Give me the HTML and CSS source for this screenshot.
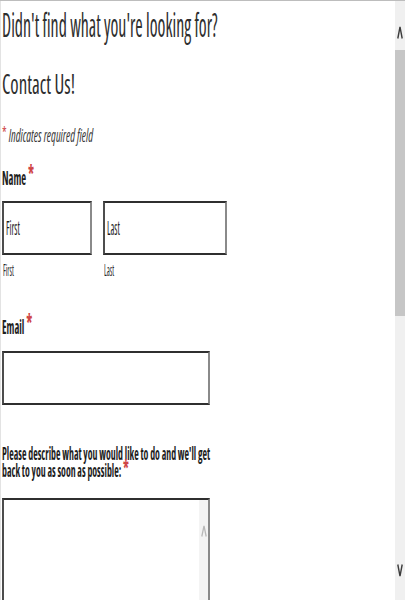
FILE: index.html
```html
<!DOCTYPE html>
<html lang="en">
<head>
<meta charset="utf-8">
<title>Contact Us</title>
<link rel="stylesheet" href="styles.css">
</head>
<body>
<div class="frame">
  <main class="content">
    <h1 class="title"><span class="sq sx-h1">Didn't find what you're looking for?</span></h1>
    <h2 class="subtitle"><span class="sq sx-h2">Contact Us!</span></h2>
    <p class="note"><span class="sq sx-note"><span class="req req-note">*</span> Indicates required field</span></p>

    <div class="label label-name"><span class="sq sx-label">Name <span class="req">*</span></span></div>
    <div class="name-row">
      <div class="name-col col-first">
        <div class="box"><span class="sq sx-ph">First</span></div>
        <div class="sub"><span class="sq sx-sub">First</span></div>
      </div>
      <div class="name-col col-last">
        <div class="box"><span class="sq sx-ph">Last</span></div>
        <div class="sub"><span class="sq sx-sub">Last</span></div>
      </div>
    </div>

    <div class="label label-email"><span class="sq sx-label">Email <span class="req">*</span></span></div>
    <div class="box box-email"></div>

    <div class="label label-long"><span class="sq sx-long">Please describe what you would like to do and we'll get<br>back to you as soon as possible: <span class="req req-long">*</span></span></div>
    <div class="box box-area">
      <div class="ta-track">
        <svg class="ta-arrow" width="6" height="12" viewBox="0 0 6 12"><polyline points="0.8,11.5 3,0.8 5.2,11.5" fill="none" stroke="#b9b9b9" stroke-width="1.3"/></svg>
      </div>
    </div>
  </main>
  <div class="scrollbar">
    <div class="sb-up">
      <svg width="6" height="13" viewBox="0 0 6 13"><polyline points="0.8,12.5 3,0.8 5.2,12.5" fill="none" stroke="#3c3c3c" stroke-width="1.4"/></svg>
    </div>
    <div class="sb-thumb"></div>
    <div class="sb-rest">
      <svg width="6" height="13" viewBox="0 0 6 13"><polyline points="0.8,0.5 3,12.2 5.2,0.5" fill="none" stroke="#3c3c3c" stroke-width="1.4"/></svg>
    </div>
  </div>
</div>
</body>
</html>
```
FILE: styles.css
```css
html, body {
  margin: 0;
  padding: 0;
  background: #ffffff;
}

.frame {
  display: flex;
  height: 600px;
  box-sizing: border-box;
  border-top: 1px solid #bdbdbd;
  overflow: hidden;
}

.content {
  flex: 1;
  min-width: 0;
  border-left: 1px solid #e3e3e3;
  padding-left: 1px;
  overflow: hidden;
  font-family: "Open Sans", "Liberation Sans", sans-serif;
  font-stretch: 75%;
  color: #333333;
}

.sq {
  display: inline-block;
  white-space: nowrap;
  transform-origin: 0 50%;
}

.sx-h1 { transform: scaleX(0.558); }
.sx-h2 { transform: scaleX(0.7); }
.sx-note { transform: scaleX(0.64); }
.sx-label { transform: scaleX(0.555); }
.sx-long { transform: scaleX(0.579); }
.sx-ph { transform: scaleX(0.47); }
.sx-sub { transform: scaleX(0.44); }

.title {
  margin: 6px 0 0;
  font-size: 32px;
  line-height: 36px;
  font-weight: 500;
  color: #2e2e2e;
}

.subtitle {
  margin: 25px 0 0;
  font-size: 27px;
  line-height: 32px;
  font-weight: 500;
  color: #2e2e2e;
}

.note {
  margin: 25px 0 0;
  font-size: 18px;
  line-height: 20px;
  font-style: italic;
  color: #3a3a3a;
}

.req {
  color: #cf4646;
  font-style: normal;
  font-weight: 700;
  font-size: 1.3em;
  line-height: 0;
  vertical-align: 0.08em;
}

.req-note {
  font-size: 1.05em;
  font-weight: 400;
  vertical-align: 0.12em;
}

.req-long {
  font-size: 1.35em;
  vertical-align: 0.02em;
}

.label {
  font-weight: 700;
  color: #1e1e1e;
  font-size: 19px;
  line-height: 22px;
}

.label-name { margin-top: 22px; }
.label-email { margin-top: 37px; }
.label-long {
  margin-top: 40px;
  font-size: 17px;
  line-height: 17px;
}

.name-row {
  display: flex;
  gap: 11px;
  margin-top: 12px;
}

.col-first { width: 90px; }
.col-last { width: 124px; }

.box {
  box-sizing: border-box;
  height: 54px;
  border-top: 2px solid #2f2f2f;
  border-bottom: 2px solid #2f2f2f;
  border-left: 2px solid #4d4d4d;
  border-right: 2px solid #8a8a8a;
  padding: 13px 0 13px 2px;
  font-size: 20px;
  line-height: 24px;
  font-weight: 500;
  color: #1e1e1e;
  background: #ffffff;
}

.sub {
  margin-top: 6px;
  font-size: 17px;
  line-height: 18px;
  font-weight: 500;
  color: #2a2a2a;
  padding-left: 1px;
}

.box-email {
  width: 208px;
  margin-top: 13px;
}

.box-area {
  width: 208px;
  height: 150px;
  margin-top: 19px;
  padding: 0;
  display: flex;
  justify-content: flex-end;
}

.ta-track {
  width: 9px;
  background: #f4f4f4;
  display: flex;
  flex-direction: column;
  align-items: center;
  padding-top: 25px;
}

.ta-arrow { display: block; }

.scrollbar {
  width: 10px;
  flex: none;
  background: #f0f0f0;
  display: flex;
  flex-direction: column;
}

.sb-up {
  height: 49px;
  box-sizing: border-box;
  padding-top: 25px;
  display: flex;
  justify-content: center;
}

.sb-thumb {
  height: 266px;
  background: #c6c6c6;
}

.sb-rest {
  flex: 1;
  display: flex;
  justify-content: center;
  align-items: flex-end;
  padding-bottom: 23px;
}

.scrollbar svg { display: block; }
```
